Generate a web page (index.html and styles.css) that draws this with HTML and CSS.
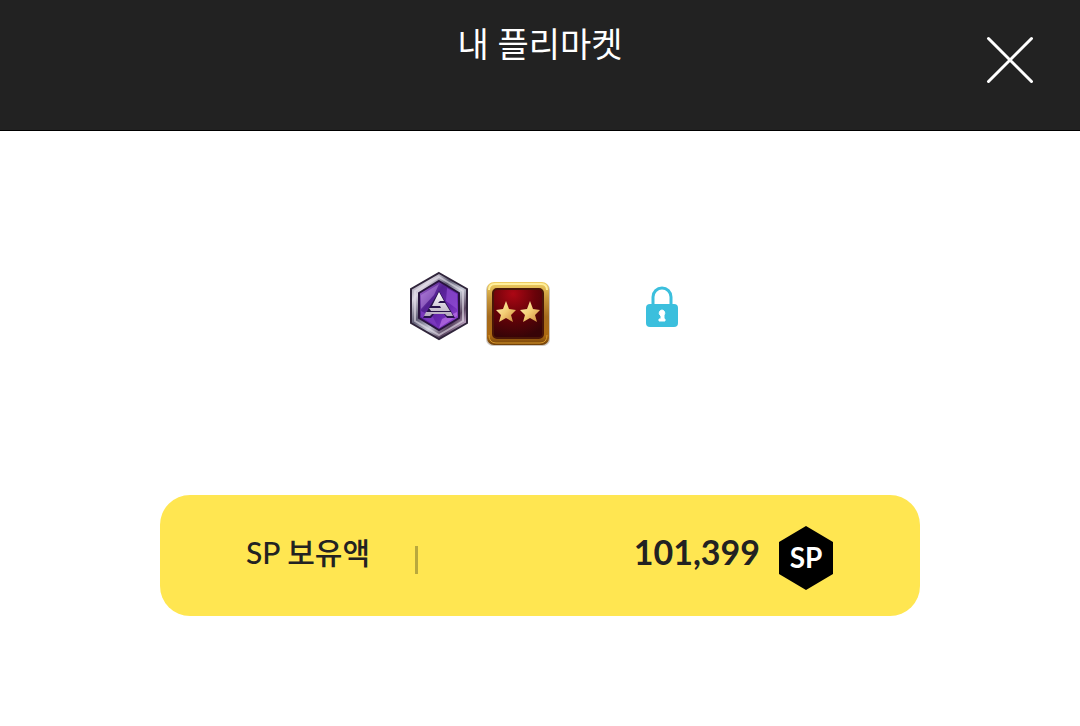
FILE: index.html
```html
<!DOCTYPE html>
<html lang="ko">
<head>
    <meta charset="UTF-8">
    <meta name="viewport" content="width=device-width, initial-scale=1.0">
    <title>내 플리마켓</title>
    <link rel="stylesheet" href="styles.css">
</head>
<body>
    <header class="header">
        <h1 class="title">내 플리마켓</h1>
        <button class="close" type="button" aria-label="닫기">
            <svg width="48" height="48" viewBox="0 0 48 48" aria-hidden="true">
                <path d="M2.5 2.5L45.5 45.5M45.5 2.5L2.5 45.5" stroke="#fff" stroke-width="3" stroke-linecap="round"/>
            </svg>
        </button>
    </header>

    <main>
        <section class="profile">
            <svg class="rank" width="60" height="70" viewBox="0 0 60 70" role="img" aria-label="등급">
                <defs>
                    <linearGradient id="silver" x1="0" y1="0" x2="1" y2="1">
                        <stop offset="0" stop-color="#7c7389"/>
                        <stop offset=".22" stop-color="#d9d4e0"/>
                        <stop offset=".4" stop-color="#5f5d74"/>
                        <stop offset=".58" stop-color="#c4c8d4"/>
                        <stop offset=".75" stop-color="#58435f"/>
                        <stop offset=".88" stop-color="#c9aecd"/>
                        <stop offset="1" stop-color="#57405b"/>
                    </linearGradient>
                    <linearGradient id="purple" x1="0" y1="0" x2="1" y2="1">
                        <stop offset="0" stop-color="#b57bdc"/>
                        <stop offset=".35" stop-color="#542192"/>
                        <stop offset=".65" stop-color="#6a28b1"/>
                        <stop offset="1" stop-color="#a154dc"/>
                    </linearGradient>
                    <linearGradient id="steel" x1="0" y1="0" x2="0" y2="1">
                        <stop offset="0" stop-color="#fff"/>
                        <stop offset="1" stop-color="#b4a9bd"/>
                    </linearGradient>
                </defs>
                <path d="M30 2L58 18V52L30 68L2 52V18Z" fill="url(#silver)" stroke="#30253b" stroke-width="2"/>
                <path d="M30 6L54 20V50L30 64L6 50V20Z" fill="none" stroke="#e6e0eb" stroke-width="2" opacity=".6"/>
                <path d="M30 10L50 22V47L30 59L10 47V22Z" fill="url(#purple)" stroke="#29133f" stroke-width="2"/>
                <path d="M12 24L30 13L25 24L12 38Z" fill="#c899ec" opacity=".45"/>
                <path d="M38 17L48 23V38L37 30Z" fill="#9450d5" opacity=".65"/>
                <path d="M12 40L24 46L29 56L12 46Z" fill="#7a37bd"/>
                <path d="M33 48L48 41V45L30 57Z" fill="#ba72e7" opacity=".7"/>
                <path d="M30 20L46 47H38L35 43H25L22 47H14Z" fill="#27134a"/>
                <path d="M30 21L35 30H31L29 32H36L41 40H22L20 37H32L31 35H23ZM17 41H42L44 45H38L36 43H23L21 45H15Z" fill="url(#steel)"/>
            </svg>

            <svg class="level" width="66" height="66" viewBox="0 0 66 66" role="img" aria-label="별 두 개">
                <defs>
                    <linearGradient id="gold" x1="0" y1="0" x2="0" y2="1">
                        <stop offset="0" stop-color="#f0cf62"/>
                        <stop offset=".25" stop-color="#c8983c"/>
                        <stop offset=".55" stop-color="#a56b1e"/>
                        <stop offset=".85" stop-color="#ac6912"/>
                        <stop offset="1" stop-color="#704009"/>
                    </linearGradient>
                    <radialGradient id="red" cx=".4" cy=".1" r=".9">
                        <stop offset="0" stop-color="#ac0714"/>
                        <stop offset=".5" stop-color="#690209"/>
                        <stop offset="1" stop-color="#370407"/>
                    </radialGradient>
                    <linearGradient id="star" x1="0" y1="0" x2="1" y2="1">
                        <stop offset="0" stop-color="#fff5b8"/>
                        <stop offset=".5" stop-color="#f4ce75"/>
                        <stop offset="1" stop-color="#c98238"/>
                    </linearGradient>
                </defs>
                <rect x="1" y="2" width="64" height="63" rx="7" fill="#b8afa7" opacity=".7"/>
                <rect x="2" y="1" width="62" height="63" rx="7" fill="url(#gold)"/>
                <path d="M4 9Q4 3 10 3H56Q62 3 62 9" fill="none" stroke="#ffef9b" stroke-width="2"/>
                <path d="M4 54Q4 62 11 62H55Q62 62 62 54" fill="none" stroke="#d99a2d" stroke-width="1"/>
                <rect x="8" y="8" width="50" height="49" rx="4" fill="url(#red)" stroke="#4a1607" stroke-width="2"/>
                <path id="star-shape" d="M21 20L24 28L31 29L26 34L28 41L21 37L14 41L16 34L11 29L18 28Z" fill="url(#star)"/>
                <use href="#star-shape" x="24"/>
            </svg>

            <button class="lock" type="button" aria-label="잠금">
                <svg width="32" height="42" viewBox="0 0 32 42" aria-hidden="true">
                    <path d="M7 20V11A9 9 0 0 1 25 11V20" fill="none" stroke="#3bbfdd" stroke-width="3"/>
                    <rect y="18" width="32" height="23" rx="4" fill="#3bbfdd"/>
                    <path d="M16 24A3 3 0 0 0 14 29L15 30V33H13V35H19V33H18V30L18 29A3 3 0 0 0 16 24Z" fill="#fff" stroke="#fff"/>
                </svg>
            </button>
        </section>

        <section class="balance">
            <h2 class="balance-label">SP 보유액</h2>
            <span class="divider"></span>
            <strong class="amount">101,399</strong>
            <svg class="coin" width="56" height="64" viewBox="0 0 56 64" role="img" aria-label="SP">
                <path d="M28 0L55 16V48L28 64L1 48V16Z" fill="#000"/>
                <text x="28" y="42" text-anchor="middle" class="coin-text">SP</text>
            </svg>
        </section>
    </main>
</body>
</html>
```
FILE: styles.css
```css
* {
    box-sizing: border-box;
}
body {
    margin: 0;
    font-family: Lato, "Noto Sans CJK KR", sans-serif;
    background: #fff;
    color: #222;
}
button {
    padding: 0;
    border: none;
    background: none;
    cursor: pointer;
}
svg {
    display: block;
}
.header {
    display: grid;
    grid-template-columns: 1fr auto 1fr;
    align-items: start;
    padding: 20px 46px 46px;
    border-bottom: 1px solid #000;
    background: #222;
    color: #fff;
}
.title {
    grid-column: 2;
    margin: 0;
    font-size: 34px;
    font-weight: 400;
    line-height: 48px;
}
.close {
    justify-self: end;
    margin-top: 16px;
}
.profile {
    display: flex;
    justify-content: center;
    padding: 140px 0 148px 6px;
}
.level {
    margin: 10px 0 0 16px;
}
.lock {
    align-self: flex-start;
    margin: 15px 0 0 95px;
}
.balance {
    display: flex;
    align-items: flex-start;
    max-width: 760px;
    margin: 0 auto;
    padding: 26px 86px;
    border-radius: 30px;
    background: #ffe651;
}
.balance-label {
    margin: 0;
    font-family: "Lato Medium", Lato, "Noto Sans CJK KR", sans-serif;
    font-size: 30px;
    font-weight: 500;
    line-height: 62px;
}
.divider {
    width: 3px;
    height: 28px;
    margin: 25px 0 0 45px;
    background: #b9a83d;
}
.amount {
    margin-left: auto;
    font-size: 34px;
    font-weight: 700;
    line-height: 62px;
}
.coin {
    margin: 5px 0 0 18px;
}
.coin-text {
    fill: #fff;
    font-size: 28px;
    font-weight: 700;
}
```
